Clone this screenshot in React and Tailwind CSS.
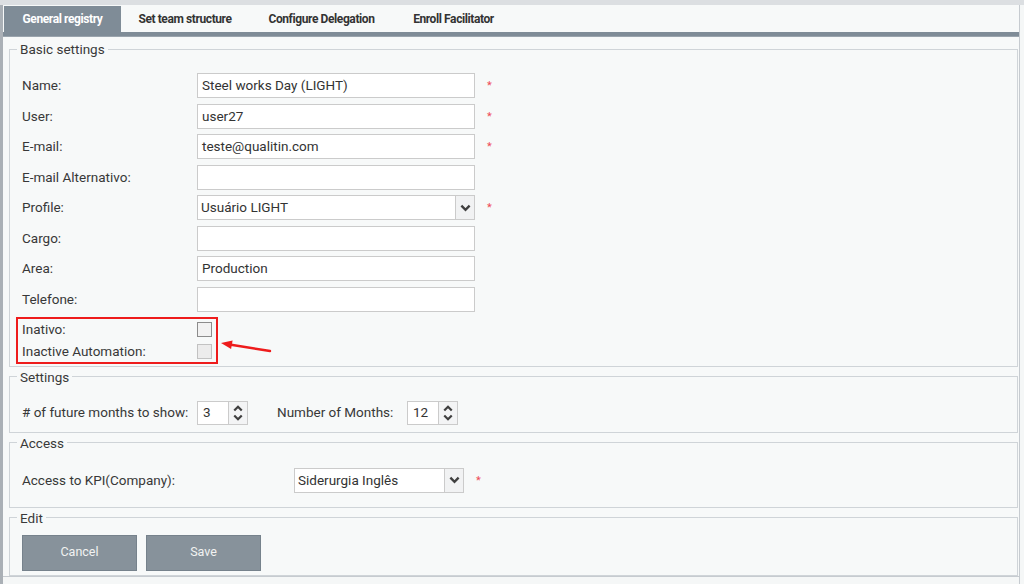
import React from "react";

const font = { fontFamily: "Roboto, 'Open Sans', Arial, sans-serif" };

const Chevron = ({ up = false, className = "" }) => (
  <svg viewBox="0 0 12 8" className={className}>
    <polyline
      points={up ? "1.5,6.5 6,2 10.5,6.5" : "1.5,1.5 6,6 10.5,1.5"}
      fill="none"
      stroke="#3f3f3f"
      strokeWidth="2.6"
      strokeLinejoin="miter"
    />
  </svg>
);

const Req = () => (
  <span className="ml-[12px] self-start mt-[7px] text-[11px] leading-none text-[#ee4a55]">*</span>
);

const Row = ({ label, children, req }) => (
  <div className="flex items-center h-[25px]">
    <div className="w-[175px] shrink-0 text-[13.5px] text-[#383838]">{label}</div>
    {children}
    {req && <Req />}
  </div>
);

const TextBox = ({ value = "", width = "w-[278px]" }) => (
  <div
    className={`${width} h-[25px] bg-white border border-[#cbcbcb] pl-[4px] flex items-center text-[13.5px] text-[#333]`}
  >
    {value}
  </div>
);

const SelectBox = ({ value, width, textWidth }) => (
  <div className={`${width} h-[25px] bg-white border border-[#cbcbcb] flex`}>
    <div className={`${textWidth} pl-[3px] flex items-center text-[13.5px] text-[#333]`}>{value}</div>
    <div className="flex-1 border-l border-[#cbcbcb] bg-[#f1f2f3] flex items-center justify-center">
      <Chevron className="w-[11px] h-[8px]" />
    </div>
  </div>
);

const Spinner = ({ value }) => (
  <div className="w-[51px] h-[24px] bg-white border border-[#cbcbcb] flex">
    <div className="w-[30px] pl-[5px] flex items-center text-[13.5px] text-[#333]">{value}</div>
    <div className="flex-1 border-l border-[#cbcbcb] bg-[#f3f4f5] flex flex-col items-center justify-center gap-[2px]">
      <Chevron up className="w-[10px] h-[7px]" />
      <Chevron className="w-[10px] h-[7px]" />
    </div>
  </div>
);

const Legend = ({ children }) => (
  <legend className="-ml-[5px] px-[3px] text-[13.5px] leading-[16px] text-[#3a3a3a]">{children}</legend>
);

const tabs = [
  { name: "General registry", w: "w-[117px]" },
  { name: "Set team structure", w: "w-[128px]" },
  { name: "Configure Delegation", w: "w-[145px]" },
  { name: "Enroll Facilitator", w: "w-[119px]" },
];

export default function App() {
  return (
    <div className="relative w-[1024px] h-[584px] bg-[#f5f7f7] overflow-hidden" style={font}>
      <div className="h-[5px] bg-[#dcdfe2]" />
      <div className="flex h-[579px]">
        <div className="w-[3px] bg-[#aab0b6]" />
        <div className="w-[1017px] flex flex-col border-r border-[#c6cbd0]">
          {/* tab strip */}
          <div className="h-[27px] flex items-end bg-[#f7f9f9] pl-[1px]">
            {tabs.map((t, i) => (
              <div
                key={t.name}
                className={`${t.w} h-[26px] flex items-center justify-center text-[12px] font-bold tracking-[-0.4px] ${
                  i === 0 ? "bg-[#7f8c97] text-white" : "text-[#333]"
                }`}
              >
                {t.name}
              </div>
            ))}
          </div>
          <div className="h-[5px] bg-[#7f8c97] border-b border-[#9aa4ad]" />

          {/* panel */}
          <div className="h-[540px] bg-[#f7f9f9] border-b border-[#c6cbd0] pt-[4px] pl-[6px] pr-[1px] flex flex-col gap-[2px]">
            <fieldset className="border border-[#cfd4d8] pl-[12px] pt-[16px] pb-[2px] flex flex-col">
              <Legend>Basic settings</Legend>
              <div className="flex flex-col gap-[5.5px]">
                <Row label="Name:" req>
                  <TextBox value="Steel works Day (LIGHT)" />
                </Row>
                <Row label="User:" req>
                  <TextBox value="user27" />
                </Row>
                <Row label="E-mail:" req>
                  <TextBox value="teste@qualitin.com" />
                </Row>
                <Row label="E-mail Alternativo:">
                  <TextBox />
                </Row>
                <Row label="Profile:" req>
                  <SelectBox value="Usuário LIGHT" width="w-[278px]" textWidth="w-[257px]" />
                </Row>
                <Row label="Cargo:">
                  <TextBox />
                </Row>
                <Row label="Area:">
                  <TextBox value="Production" />
                </Row>
                <Row label="Telefone:">
                  <TextBox />
                </Row>
              </div>
              <div className="mt-[5px] -ml-[6px] w-[202px] border-2 border-[#ee1c1c] pl-[4px] pt-[1px] flex flex-col gap-[2px]">
                <div className="h-[20px] flex items-center">
                  <div className="w-[175px] text-[13.5px] text-[#383838]">Inativo:</div>
                  <div className="w-[15px] h-[15px] border border-[#8c8c8c] bg-[#f2f2f2]" />
                </div>
                <div className="h-[20px] flex items-center">
                  <div className="w-[175px] text-[13.5px] text-[#383838]">Inactive Automation:</div>
                  <div className="w-[15px] h-[15px] border border-[#c2c2c2] bg-[#ececec]" />
                </div>
              </div>
            </fieldset>

            <fieldset className="border border-[#cfd4d8] pl-[12px] pt-[16px] pb-[7px]">
              <Legend>Settings</Legend>
              <div className="flex items-center h-[24px]">
                <span className="text-[13.5px] text-[#383838] w-[175px]"># of future months to show:</span>
                <Spinner value="3" />
                <span className="ml-[29px] w-[130px] text-[13.5px] text-[#383838]">Number of Months:</span>
                <Spinner value="12" />
              </div>
            </fieldset>

            <fieldset className="border border-[#cfd4d8] pl-[12px] pt-[17px] pb-[14px]">
              <Legend>Access</Legend>
              <div className="flex items-center h-[25px]">
                <span className="w-[272px] text-[13.5px] text-[#383838]">Access to KPI(Company):</span>
                <SelectBox value="Siderurgia Inglês" width="w-[170px]" textWidth="w-[149px]" />
                <Req />
              </div>
            </fieldset>

            <fieldset className="border border-[#cfd4d8] pl-[12px] pt-[9px] pb-[4px]">
              <Legend>Edit</Legend>
              <div className="flex gap-[9px]">
                <button className="w-[115px] h-[36px] bg-[#87929b] border border-[#76828c] text-[12.5px] text-[#f2f2f2]">
                  Cancel
                </button>
                <button className="w-[115px] h-[36px] bg-[#87929b] border border-[#76828c] text-[12.5px] text-[#f2f2f2]">
                  Save
                </button>
              </div>
            </fieldset>
          </div>
        </div>
      </div>

      {/* annotation arrow */}
      <svg className="absolute left-[218px] top-[335px] w-[56px] h-[20px] pointer-events-none" viewBox="0 0 56 20">
        <line x1="52" y1="16" x2="13" y2="9.8" stroke="#ee1c1c" strokeWidth="2.4" strokeLinecap="round" />
        <polygon points="3,8 14.6,5.6 13.1,13.9" fill="#ee1c1c" />
      </svg>
    </div>
  );
}
